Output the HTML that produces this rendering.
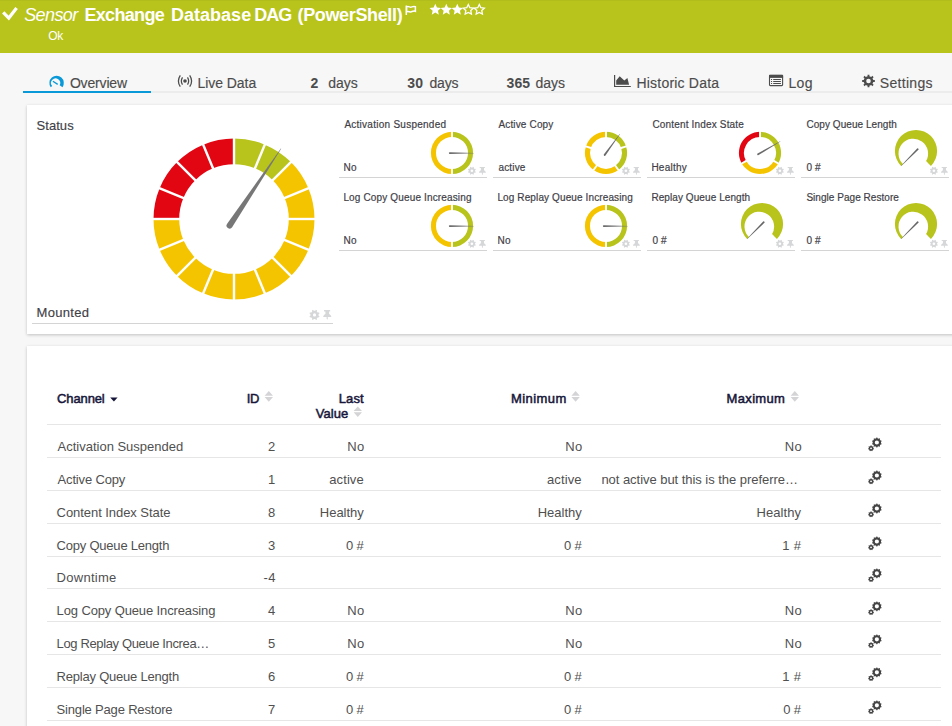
<!DOCTYPE html><html lang="en"><head><meta charset="utf-8"><title>Exchange Database DAG (PowerShell) | Sensor Details</title>
<style>
html,body{margin:0;padding:0}
body{width:952px;height:726px;overflow:hidden;position:relative;background:#f7f7f7;font-family:'Liberation Sans', Arial, sans-serif;}
.t{position:absolute;white-space:pre;line-height:1;margin:0;font-weight:400}
header .bar{position:absolute;left:0;top:0;width:952px;height:53px;background:#b8c41c;border-top:1px solid #b0bd1b;box-sizing:border-box}
h1,p{margin:0;font-size:inherit;font-weight:inherit}
nav .rule{position:absolute;left:23px;top:91px;width:929px;height:2px;background:#ececec}
nav .act{position:absolute;left:23px;top:91px;width:128px;height:2px;background:#0a99d8}
.card{position:absolute;background:#fff;box-shadow:0 1px 3px rgba(0,0,0,.22)}
#c1{left:27px;top:105px;width:940px;height:229px}
#c2{left:27px;top:346px;width:940px;height:400px}
.hl{position:absolute;height:1px;background:#d4d4d4}
.rl{position:absolute;left:47px;width:894px;height:1px;background:#e6e6e6}
svg{position:absolute;left:0;top:0}
</style></head><body>
<header><div class="bar"></div>
<h1><span class="t" style="left:24.2px;top:5.8px;font-size:18px;font-style:italic;letter-spacing:-0.6px;color:#fff;">Sensor</span> <span class="t" style="left:84.4px;top:5.8px;font-size:18px;font-weight:700;letter-spacing:-0.67px;color:#fff;">Exchange</span> <span class="t" style="left:171.1px;top:5.8px;font-size:18px;font-weight:700;color:#fff;">Database</span> <span class="t" style="left:254.3px;top:5.8px;font-size:18px;font-weight:700;letter-spacing:-1.0px;color:#fff;">DAG</span> <span class="t" style="left:297.5px;top:5.8px;font-size:18px;font-weight:700;letter-spacing:-0.35px;color:#fff;">(PowerShell)</span></h1>
<p><span class="t" style="left:48.3px;top:29.7px;font-size:12px;letter-spacing:-0.35px;color:#fff;">Ok</span></p>
</header>
<nav><div class="rule"></div><div class="act"></div>
<span class="t" style="left:69.9px;top:75.6px;font-size:14px;letter-spacing:-0.17px;color:#4c4c4c;-webkit-text-stroke:0.15px #4c4c4c;">Overview</span>
<span class="t" style="left:197.6px;top:75.6px;font-size:14px;letter-spacing:-0.07px;color:#4c4c4c;-webkit-text-stroke:0.15px #4c4c4c;">Live Data</span>
<span class="t" style="left:310.4px;top:75.6px;font-size:14px;font-weight:700;color:#4c4c4c;">2</span>
<span class="t" style="left:328.2px;top:75.6px;font-size:14px;letter-spacing:-0.03px;color:#4c4c4c;-webkit-text-stroke:0.15px #4c4c4c;">days</span>
<span class="t" style="left:407.2px;top:75.6px;font-size:14px;font-weight:700;letter-spacing:0.2px;color:#4c4c4c;">30</span>
<span class="t" style="left:429.4px;top:75.6px;font-size:14px;letter-spacing:-0.13px;color:#4c4c4c;-webkit-text-stroke:0.15px #4c4c4c;">days</span>
<span class="t" style="left:506.4px;top:75.6px;font-size:14px;font-weight:700;letter-spacing:0.2px;color:#4c4c4c;">365</span>
<span class="t" style="left:535.4px;top:75.6px;font-size:14px;color:#4c4c4c;-webkit-text-stroke:0.15px #4c4c4c;">days</span>
<span class="t" style="left:636.5px;top:75.6px;font-size:14px;letter-spacing:0.2px;color:#4c4c4c;-webkit-text-stroke:0.15px #4c4c4c;">Historic Data</span>
<span class="t" style="left:788.4px;top:75.6px;font-size:14px;letter-spacing:0.35px;color:#4c4c4c;-webkit-text-stroke:0.15px #4c4c4c;">Log</span>
<span class="t" style="left:879.8px;top:75.6px;font-size:14px;letter-spacing:0.31px;color:#4c4c4c;-webkit-text-stroke:0.15px #4c4c4c;">Settings</span>
</nav>
<main>
<section id="status"><div class="card" id="c1"></div>
<div class="gauge big"><span class="t" style="left:36.5px;top:118.6px;font-size:13px;letter-spacing:0.06px;color:#3f3f48;-webkit-text-stroke:0.15px #3f3f48;">Status</span> <span class="t" style="left:36.5px;top:305.7px;font-size:13px;letter-spacing:0.32px;color:#3f3f48;-webkit-text-stroke:0.15px #3f3f48;">Mounted</span><div class="hl" style="left:32px;top:323px;width:301px"></div></div>
<div class="gauge"><span class="t" style="left:344.4px;top:119.6px;font-size:10px;letter-spacing:0.26px;color:#3f3f48;-webkit-text-stroke:0.2px #3f3f48;">Activation Suspended</span> <span class="t" style="left:343.4px;top:162.5px;font-size:10px;letter-spacing:0.35px;color:#3f3f48;-webkit-text-stroke:0.2px #3f3f48;">No</span><div class="hl" style="left:339px;top:177px;width:148px"></div></div>
<div class="gauge"><span class="t" style="left:498.4px;top:119.6px;font-size:10px;letter-spacing:0.16px;color:#3f3f48;-webkit-text-stroke:0.2px #3f3f48;">Active Copy</span> <span class="t" style="left:498.4px;top:162.5px;font-size:10px;letter-spacing:0.18px;color:#3f3f48;-webkit-text-stroke:0.2px #3f3f48;">active</span><div class="hl" style="left:493px;top:177px;width:148px"></div></div>
<div class="gauge"><span class="t" style="left:652.4px;top:119.6px;font-size:10px;letter-spacing:0.17px;color:#3f3f48;-webkit-text-stroke:0.2px #3f3f48;">Content Index State</span> <span class="t" style="left:651.4px;top:162.5px;font-size:10px;letter-spacing:0.25px;color:#3f3f48;-webkit-text-stroke:0.2px #3f3f48;">Healthy</span><div class="hl" style="left:647px;top:177px;width:148px"></div></div>
<div class="gauge"><span class="t" style="left:806.4px;top:119.6px;font-size:10px;letter-spacing:0.06px;color:#3f3f48;-webkit-text-stroke:0.2px #3f3f48;">Copy Queue Length</span> <span class="t" style="left:806.4px;top:162.5px;font-size:10px;letter-spacing:0.15px;color:#3f3f48;-webkit-text-stroke:0.2px #3f3f48;">0 #</span><div class="hl" style="left:801px;top:177px;width:148px"></div></div>
<div class="gauge"><span class="t" style="left:343.4px;top:192.6px;font-size:10px;letter-spacing:0.15px;color:#3f3f48;-webkit-text-stroke:0.2px #3f3f48;">Log Copy Queue Increasing</span> <span class="t" style="left:343.4px;top:235.5px;font-size:10px;letter-spacing:0.35px;color:#3f3f48;-webkit-text-stroke:0.2px #3f3f48;">No</span><div class="hl" style="left:339px;top:250px;width:148px"></div></div>
<div class="gauge"><span class="t" style="left:497.4px;top:192.6px;font-size:10px;letter-spacing:0.12px;color:#3f3f48;-webkit-text-stroke:0.2px #3f3f48;">Log Replay Queue Increasing</span> <span class="t" style="left:497.4px;top:235.5px;font-size:10px;letter-spacing:0.35px;color:#3f3f48;-webkit-text-stroke:0.2px #3f3f48;">No</span><div class="hl" style="left:493px;top:250px;width:148px"></div></div>
<div class="gauge"><span class="t" style="left:651.4px;top:192.6px;font-size:10px;letter-spacing:0.08px;color:#3f3f48;-webkit-text-stroke:0.2px #3f3f48;">Replay Queue Length</span> <span class="t" style="left:652.4px;top:235.5px;font-size:10px;letter-spacing:0.15px;color:#3f3f48;-webkit-text-stroke:0.2px #3f3f48;">0 #</span><div class="hl" style="left:647px;top:250px;width:148px"></div></div>
<div class="gauge"><span class="t" style="left:806.4px;top:192.6px;font-size:10px;letter-spacing:0.04px;color:#3f3f48;-webkit-text-stroke:0.2px #3f3f48;">Single Page Restore</span> <span class="t" style="left:806.4px;top:235.5px;font-size:10px;letter-spacing:0.15px;color:#3f3f48;-webkit-text-stroke:0.2px #3f3f48;">0 #</span><div class="hl" style="left:801px;top:250px;width:148px"></div></div>
</section>
<section id="channels"><div class="card" id="c2"></div>
<div class="thead"><span class="t" style="left:57.1px;top:392.2px;font-size:13px;letter-spacing:-0.13px;color:#16163a;-webkit-text-stroke:0.5px #16163a;">Channel</span> <span class="t" style="left:246.7px;top:392.2px;font-size:13px;letter-spacing:-0.35px;color:#16163a;-webkit-text-stroke:0.5px #16163a;">ID</span> <span class="t" style="left:338.7px;top:392.2px;font-size:13px;letter-spacing:0.13px;color:#16163a;-webkit-text-stroke:0.5px #16163a;">Last</span> <span class="t" style="left:315.7px;top:406.8px;font-size:13px;letter-spacing:0.08px;color:#16163a;-webkit-text-stroke:0.5px #16163a;">Value</span> <span class="t" style="left:510.9px;top:392.2px;font-size:13px;letter-spacing:0.45px;color:#16163a;-webkit-text-stroke:0.5px #16163a;">Minimum</span> <span class="t" style="left:726.6px;top:392.2px;font-size:13px;letter-spacing:0.33px;color:#16163a;-webkit-text-stroke:0.5px #16163a;">Maximum</span><div class="rl" style="top:424px"></div></div>
<div class="row"><span class="t" style="left:57.6px;top:440.2px;font-size:13px;letter-spacing:-0.01px;color:#505050;">Activation Suspended</span> <span class="t" style="left:267.9px;top:440.2px;font-size:13px;color:#505050;">2</span> <span class="t" style="left:347.35px;top:440.2px;font-size:13px;letter-spacing:0.35px;color:#505050;">No</span> <span class="t" style="left:565.25px;top:440.2px;font-size:13px;letter-spacing:0.35px;color:#505050;">No</span> <span class="t" style="left:784.65px;top:440.2px;font-size:13px;letter-spacing:0.35px;color:#505050;">No</span><div class="rl" style="top:457px"></div></div>
<div class="row"><span class="t" style="left:57.6px;top:473.2px;font-size:13px;letter-spacing:-0.17px;color:#505050;">Active Copy</span> <span class="t" style="left:267.9px;top:473.2px;font-size:13px;color:#505050;">1</span> <span class="t" style="left:329.3px;top:473.2px;font-size:13px;letter-spacing:0.08px;color:#505050;">active</span> <span class="t" style="left:547.0px;top:473.2px;font-size:13px;letter-spacing:0.12px;color:#505050;">active</span> <span class="t" style="left:601.4px;top:473.2px;font-size:13px;letter-spacing:-0.04px;color:#505050;">not active but this is the preferre…</span><div class="rl" style="top:490px"></div></div>
<div class="row"><span class="t" style="left:56.6px;top:506.2px;font-size:13px;letter-spacing:-0.06px;color:#505050;">Content Index State</span> <span class="t" style="left:267.9px;top:506.2px;font-size:13px;color:#505050;">8</span> <span class="t" style="left:319.82px;top:506.2px;font-size:13px;letter-spacing:-0.02px;color:#505050;">Healthy</span> <span class="t" style="left:537.72px;top:506.2px;font-size:13px;letter-spacing:-0.02px;color:#505050;">Healthy</span> <span class="t" style="left:756.4px;top:506.2px;font-size:13px;letter-spacing:0.1px;color:#505050;">Healthy</span><div class="rl" style="top:523px"></div></div>
<div class="row"><span class="t" style="left:56.6px;top:539.2px;font-size:13px;letter-spacing:-0.22px;color:#505050;">Copy Queue Length</span> <span class="t" style="left:267.9px;top:539.2px;font-size:13px;color:#505050;">3</span> <span class="t" style="left:346.0px;top:539.2px;font-size:13px;letter-spacing:-0.15px;color:#505050;">0 #</span> <span class="t" style="left:563.9px;top:539.2px;font-size:13px;letter-spacing:-0.15px;color:#505050;">0 #</span> <span class="t" style="left:782.3px;top:539.2px;font-size:13px;letter-spacing:0.35px;color:#505050;">1 #</span><div class="rl" style="top:556px"></div></div>
<div class="row"><span class="t" style="left:56.6px;top:571px;font-size:13px;letter-spacing:0.27px;color:#505050;">Downtime</span> <span class="t" style="left:263.55px;top:571px;font-size:13px;letter-spacing:0.35px;color:#505050;">-4</span><div class="rl" style="top:588px"></div></div>
<div class="row"><span class="t" style="left:56.6px;top:604px;font-size:13px;letter-spacing:-0.13px;color:#505050;">Log Copy Queue Increasing</span> <span class="t" style="left:267.9px;top:604px;font-size:13px;color:#505050;">4</span> <span class="t" style="left:347.35px;top:604px;font-size:13px;letter-spacing:0.35px;color:#505050;">No</span> <span class="t" style="left:565.25px;top:604px;font-size:13px;letter-spacing:0.35px;color:#505050;">No</span> <span class="t" style="left:784.65px;top:604px;font-size:13px;letter-spacing:0.35px;color:#505050;">No</span><div class="rl" style="top:621px"></div></div>
<div class="row"><span class="t" style="left:56.6px;top:637px;font-size:13px;letter-spacing:-0.37px;color:#505050;">Log Replay Queue Increa…</span> <span class="t" style="left:267.9px;top:637px;font-size:13px;color:#505050;">5</span> <span class="t" style="left:347.35px;top:637px;font-size:13px;letter-spacing:0.35px;color:#505050;">No</span> <span class="t" style="left:565.25px;top:637px;font-size:13px;letter-spacing:0.35px;color:#505050;">No</span> <span class="t" style="left:784.65px;top:637px;font-size:13px;letter-spacing:0.35px;color:#505050;">No</span><div class="rl" style="top:654px"></div></div>
<div class="row"><span class="t" style="left:56.6px;top:670px;font-size:13px;letter-spacing:-0.22px;color:#505050;">Replay Queue Length</span> <span class="t" style="left:267.9px;top:670px;font-size:13px;color:#505050;">6</span> <span class="t" style="left:346.0px;top:670px;font-size:13px;letter-spacing:-0.15px;color:#505050;">0 #</span> <span class="t" style="left:563.9px;top:670px;font-size:13px;letter-spacing:-0.15px;color:#505050;">0 #</span> <span class="t" style="left:782.3px;top:670px;font-size:13px;letter-spacing:0.35px;color:#505050;">1 #</span><div class="rl" style="top:687px"></div></div>
<div class="row"><span class="t" style="left:56.6px;top:703px;font-size:13px;letter-spacing:-0.18px;color:#505050;">Single Page Restore</span> <span class="t" style="left:267.9px;top:703px;font-size:13px;color:#505050;">7</span> <span class="t" style="left:346.0px;top:703px;font-size:13px;letter-spacing:-0.15px;color:#505050;">0 #</span> <span class="t" style="left:563.9px;top:703px;font-size:13px;letter-spacing:-0.15px;color:#505050;">0 #</span> <span class="t" style="left:783.3px;top:703px;font-size:13px;letter-spacing:-0.15px;color:#505050;">0 #</span><div class="rl" style="top:720px"></div></div>
</section>
</main>
<svg width="952" height="726" viewBox="0 0 952 726"><path fill="none" stroke="#fff" stroke-width="3.2" d="M3.2 12.300L8.800 18L16.600 7.900"/><g fill="none" stroke="#fff" stroke-width="1.500"><path d="M406.300 5.500v9.500"/><path d="M406.600 6.900c1.800-1.100 3.200.7 4.600.2s2.300-1.100 4.200-.4v4.600c-1.900-.7-2.800 0-4.200.5s-2.800-1.100-4.600 0z"/></g><path fill="#fff" d="M435.30 3.80L436.95 7.53L441.01 7.95L437.96 10.67L438.83 14.65L435.30 12.60L431.77 14.65L432.64 10.67L429.59 7.95L433.65 7.53Z"/><path fill="#fff" d="M446.30 3.80L447.95 7.53L452.01 7.95L448.96 10.67L449.83 14.65L446.30 12.60L442.77 14.65L443.64 10.67L440.59 7.95L444.65 7.53Z"/><path fill="#fff" d="M457.30 3.80L458.95 7.53L463.01 7.95L459.96 10.67L460.83 14.65L457.30 12.60L453.77 14.65L454.64 10.67L451.59 7.95L455.65 7.53Z"/><path fill="none" stroke="#fff" stroke-width="1.300" d="M468.30 4.50L469.83 7.70L473.34 8.16L470.77 10.60L471.42 14.09L468.30 12.40L465.18 14.09L465.83 10.60L463.26 8.16L466.77 7.70Z"/><path fill="none" stroke="#fff" stroke-width="1.300" d="M479.30 4.50L480.83 7.70L484.34 8.16L481.77 10.60L482.42 14.09L479.30 12.40L476.18 14.09L476.83 10.60L474.26 8.16L477.77 7.70Z"/><path fill="#0a99d8" d="M50.70 87.13A7.2 7.2 0 1 1 62.50 87.13L59.67 85.15A4.6 4.6 0 1 0 52.19 86.09Z"/><path stroke="#0a99d8" stroke-width="1.300" fill="none" d="M57.700 84.400L52.900 81.200"/><g fill="none" stroke="#4c4c4c" stroke-width="1.250"><circle cx="185" cy="81" r="1.800" fill="#4c4c4c" stroke="none"/><path d="M182.500 77.300Q180.200 81 182.500 84.700M187.500 77.300Q189.800 81 187.500 84.700M180.300 75.300Q176.500 81 180.300 86.700M189.700 75.300Q193.500 81 189.700 86.700"/></g><path fill="#4c4c4c" d="M614 74.900h1.200v11h15.600v1.100H614zM616.200 84.800V80.600L619.700 76.200L624.300 80.600L627.400 78.100L629.100 84.800Z"/><g><rect x="769.500" y="75.400" width="13.100" height="10.200" rx="0.800" fill="none" stroke="#4c4c4c" stroke-width="1.100"/><rect x="769" y="74.900" width="14.100" height="3" fill="#4c4c4c"/><path stroke="#4c4c4c" stroke-width="1" d="M771 79.500h1.100M771 81.500h1.100M771 83.500h1.100M773.200 79.500h7.700M773.200 81.500h7.700M773.200 83.500h7.700"/></g><path fill="#4c4c4c" fill-rule="evenodd" d="M867.59 76.22L867.55 74.67L869.45 74.67L869.41 76.22L871.23 76.98L872.30 75.85L873.65 77.20L872.52 78.27L873.28 80.09L874.83 80.05L874.83 81.95L873.28 81.91L872.52 83.73L873.65 84.80L872.30 86.15L871.23 85.02L869.41 85.78L869.45 87.33L867.55 87.33L867.59 85.78L865.77 85.02L864.70 86.15L863.35 84.80L864.48 83.73L863.72 81.91L862.17 81.95L862.17 80.05L863.72 80.09L864.48 78.27L863.35 77.20L864.70 75.85L865.77 76.98ZM866.20 81.00a2.3 2.3 0 1 0 4.6 0a2.3 2.3 0 1 0 -4.6 0Z"/><path fill="#b8c41c" d="M234.00 138.50A80.5 80.5 0 0 1 264.81 144.63L254.97 168.37A54.8 54.8 0 0 0 234.00 164.20Z"/><path fill="#b8c41c" d="M264.81 144.63A80.5 80.5 0 0 1 290.92 162.08L272.75 180.25A54.8 54.8 0 0 0 254.97 168.37Z"/><path fill="#f5c400" d="M290.92 162.08A80.5 80.5 0 0 1 308.37 188.19L284.63 198.03A54.8 54.8 0 0 0 272.75 180.25Z"/><path fill="#f5c400" d="M308.37 188.19A80.5 80.5 0 0 1 314.50 219.00L288.80 219.00A54.8 54.8 0 0 0 284.63 198.03Z"/><path fill="#f5c400" d="M314.50 219.00A80.5 80.5 0 0 1 308.37 249.81L284.63 239.97A54.8 54.8 0 0 0 288.80 219.00Z"/><path fill="#f5c400" d="M308.37 249.81A80.5 80.5 0 0 1 290.92 275.92L272.75 257.75A54.8 54.8 0 0 0 284.63 239.97Z"/><path fill="#f5c400" d="M290.92 275.92A80.5 80.5 0 0 1 264.81 293.37L254.97 269.63A54.8 54.8 0 0 0 272.75 257.75Z"/><path fill="#f5c400" d="M264.81 293.37A80.5 80.5 0 0 1 234.00 299.50L234.00 273.80A54.8 54.8 0 0 0 254.97 269.63Z"/><path fill="#f5c400" d="M234.00 299.50A80.5 80.5 0 0 1 203.19 293.37L213.03 269.63A54.8 54.8 0 0 0 234.00 273.80Z"/><path fill="#f5c400" d="M203.19 293.37A80.5 80.5 0 0 1 177.08 275.92L195.25 257.75A54.8 54.8 0 0 0 213.03 269.63Z"/><path fill="#f5c400" d="M177.08 275.92A80.5 80.5 0 0 1 159.63 249.81L183.37 239.97A54.8 54.8 0 0 0 195.25 257.75Z"/><path fill="#f5c400" d="M159.63 249.81A80.5 80.5 0 0 1 153.50 219.00L179.20 219.00A54.8 54.8 0 0 0 183.37 239.97Z"/><path fill="#e20613" d="M153.50 219.00A80.5 80.5 0 0 1 159.63 188.19L183.37 198.03A54.8 54.8 0 0 0 179.20 219.00Z"/><path fill="#e20613" d="M159.63 188.19A80.5 80.5 0 0 1 177.08 162.08L195.25 180.25A54.8 54.8 0 0 0 183.37 198.03Z"/><path fill="#e20613" d="M177.08 162.08A80.5 80.5 0 0 1 203.19 144.63L213.03 168.37A54.8 54.8 0 0 0 195.25 180.25Z"/><path fill="#e20613" d="M203.19 144.63A80.5 80.5 0 0 1 234.00 138.50L234.00 164.20A54.8 54.8 0 0 0 213.03 168.37Z"/><path stroke="#fff" stroke-width="2.4" d="M234.00 165.20L234.00 137.50"/><path stroke="#fff" stroke-width="2.4" d="M254.59 169.30L265.19 143.70"/><path stroke="#fff" stroke-width="2.4" d="M272.04 180.96L291.63 161.37"/><path stroke="#fff" stroke-width="2.4" d="M283.70 198.41L309.30 187.81"/><path stroke="#fff" stroke-width="2.4" d="M287.80 219.00L315.50 219.00"/><path stroke="#fff" stroke-width="2.4" d="M283.70 239.59L309.30 250.19"/><path stroke="#fff" stroke-width="2.4" d="M272.04 257.04L291.63 276.63"/><path stroke="#fff" stroke-width="2.4" d="M254.59 268.70L265.19 294.30"/><path stroke="#fff" stroke-width="2.4" d="M234.00 272.80L234.00 300.50"/><path stroke="#fff" stroke-width="2.4" d="M213.41 268.70L202.81 294.30"/><path stroke="#fff" stroke-width="2.4" d="M195.96 257.04L176.37 276.63"/><path stroke="#fff" stroke-width="2.4" d="M184.30 239.59L158.70 250.19"/><path stroke="#fff" stroke-width="2.4" d="M180.20 219.00L152.50 219.00"/><path stroke="#fff" stroke-width="2.4" d="M184.30 198.41L158.70 187.81"/><path stroke="#fff" stroke-width="2.4" d="M195.96 180.96L176.37 161.37"/><path stroke="#fff" stroke-width="2.4" d="M213.41 169.30L202.81 143.70"/><path fill="#777" d="M232.13 227.37L281.17 148.77L280.83 148.55L226.98 223.93A3.10 3.10 0 0 0 232.13 227.37Z"/><path fill="#d6d7d9" fill-rule="evenodd" d="M315.38 310.83L315.83 309.87L317.11 310.40L316.76 311.41L317.99 312.64L319.00 312.29L319.53 313.57L318.57 314.02L318.57 315.78L319.53 316.23L319.00 317.51L317.99 317.16L316.76 318.39L317.11 319.40L315.83 319.93L315.38 318.97L313.62 318.97L313.17 319.93L311.89 319.40L312.24 318.39L311.01 317.16L310.00 317.51L309.47 316.23L310.43 315.78L310.43 314.02L309.47 313.57L310.00 312.29L311.01 312.64L312.24 311.41L311.89 310.40L313.17 309.87L313.62 310.83ZM312.90 314.90a1.6 1.6 0 1 0 3.2 0a1.6 1.6 0 1 0 -3.2 0Z"/><path fill="#d6d7d9" transform="translate(323.20 310.10) scale(1.18)" d="M0.7 0H5.900V1.100H5V3.300C6.100 3.800 6.800 4.700 6.900 5.900H3.900V7.300L3.400 8.100L2.900 7.300V5.900H0C0.100 4.700 0.800 3.800 1.900 3.300V1.100H0.700Z"/><path fill="#b8c41c" d="M452.00 131.80A21.1 21.1 0 0 1 452.00 174.00L452.00 168.90A16 16 0 0 0 452.00 136.90Z"/><path fill="#f5c400" d="M452.00 174.00A21.1 21.1 0 0 1 452.00 131.80L452.00 136.90A16 16 0 0 0 452.00 168.90Z"/><path stroke="#fff" stroke-width="1.9" d="M452.00 137.90L452.00 130.80"/><path stroke="#fff" stroke-width="1.9" d="M452.00 167.90L452.00 175.00"/><path fill="#6a6a6a" d="M449.80 154.05L473.80 153.25L473.80 152.95L449.80 152.15A0.95 0.95 0 0 0 449.80 154.05Z"/><path fill="#d6d7d9" fill-rule="evenodd" d="M472.59 167.54L472.95 166.79L473.96 167.20L473.68 167.99L474.66 168.97L475.45 168.69L475.86 169.70L475.11 170.06L475.11 171.44L475.86 171.80L475.45 172.81L474.66 172.53L473.68 173.51L473.96 174.30L472.95 174.71L472.59 173.96L471.21 173.96L470.85 174.71L469.84 174.30L470.12 173.51L469.14 172.53L468.35 172.81L467.94 171.80L468.69 171.44L468.69 170.06L467.94 169.70L468.35 168.69L469.14 168.97L470.12 167.99L469.84 167.20L470.85 166.79L471.21 167.54ZM470.60 170.75a1.3 1.3 0 1 0 2.6 0a1.3 1.3 0 1 0 -2.6 0Z"/><path fill="#d6d7d9" transform="translate(479.00 166.90) scale(1.0)" d="M0.7 0H5.900V1.100H5V3.300C6.100 3.800 6.800 4.700 6.900 5.900H3.900V7.300L3.400 8.100L2.900 7.300V5.900H0C0.100 4.700 0.800 3.800 1.900 3.300V1.100H0.700Z"/><path fill="#b8c41c" d="M606.00 131.80A21.1 21.1 0 0 1 626.07 146.38L621.22 147.96A16 16 0 0 0 606.00 136.90Z"/><path fill="#b8c41c" d="M626.07 146.38A21.1 21.1 0 0 1 618.40 169.97L615.40 165.84A16 16 0 0 0 621.22 147.96Z"/><path fill="#f5c400" d="M618.40 169.97A21.1 21.1 0 0 1 593.60 169.97L596.60 165.84A16 16 0 0 0 615.40 165.84Z"/><path fill="#f5c400" d="M593.60 169.97A21.1 21.1 0 0 1 585.93 146.38L590.78 147.96A16 16 0 0 0 596.60 165.84Z"/><path fill="#f5c400" d="M585.93 146.38A21.1 21.1 0 0 1 606.00 131.80L606.00 136.90A16 16 0 0 0 590.78 147.96Z"/><path stroke="#fff" stroke-width="1.9" d="M606.00 137.90L606.00 130.80"/><path stroke="#fff" stroke-width="1.9" d="M620.27 148.26L627.02 146.07"/><path stroke="#fff" stroke-width="1.9" d="M614.82 165.04L618.99 170.78"/><path stroke="#fff" stroke-width="1.9" d="M597.18 165.04L593.01 170.78"/><path stroke="#fff" stroke-width="1.9" d="M591.73 148.26L584.98 146.07"/><path fill="#6a6a6a" d="M605.48 155.44L619.93 134.18L619.69 134.00L603.94 154.32A0.95 0.95 0 0 0 605.48 155.44Z"/><path fill="#d6d7d9" fill-rule="evenodd" d="M626.59 167.54L626.95 166.79L627.96 167.20L627.68 167.99L628.66 168.97L629.45 168.69L629.86 169.70L629.11 170.06L629.11 171.44L629.86 171.80L629.45 172.81L628.66 172.53L627.68 173.51L627.96 174.30L626.95 174.71L626.59 173.96L625.21 173.96L624.85 174.71L623.84 174.30L624.12 173.51L623.14 172.53L622.35 172.81L621.94 171.80L622.69 171.44L622.69 170.06L621.94 169.70L622.35 168.69L623.14 168.97L624.12 167.99L623.84 167.20L624.85 166.79L625.21 167.54ZM624.60 170.75a1.3 1.3 0 1 0 2.6 0a1.3 1.3 0 1 0 -2.6 0Z"/><path fill="#d6d7d9" transform="translate(633.00 166.90) scale(1.0)" d="M0.7 0H5.900V1.100H5V3.300C6.100 3.800 6.800 4.700 6.900 5.900H3.900V7.300L3.400 8.100L2.900 7.300V5.900H0C0.100 4.700 0.800 3.800 1.900 3.300V1.100H0.700Z"/><path fill="#b8c41c" d="M760.00 131.80A21.1 21.1 0 0 1 778.27 163.45L773.86 160.90A16 16 0 0 0 760.00 136.90Z"/><path fill="#f5c400" d="M778.27 163.45A21.1 21.1 0 0 1 741.73 163.45L746.14 160.90A16 16 0 0 0 773.86 160.90Z"/><path fill="#e20613" d="M741.73 163.45A21.1 21.1 0 0 1 760.00 131.80L760.00 136.90A16 16 0 0 0 746.14 160.90Z"/><path stroke="#fff" stroke-width="1.9" d="M760.00 137.90L760.00 130.80"/><path stroke="#fff" stroke-width="1.9" d="M772.99 160.40L779.14 163.95"/><path stroke="#fff" stroke-width="1.9" d="M747.01 160.40L740.86 163.95"/><path fill="#6a6a6a" d="M758.57 155.02L780.43 141.48L780.28 141.22L757.62 153.38A0.95 0.95 0 0 0 758.57 155.02Z"/><path fill="#d6d7d9" fill-rule="evenodd" d="M780.59 167.54L780.95 166.79L781.96 167.20L781.68 167.99L782.66 168.97L783.45 168.69L783.86 169.70L783.11 170.06L783.11 171.44L783.86 171.80L783.45 172.81L782.66 172.53L781.68 173.51L781.96 174.30L780.95 174.71L780.59 173.96L779.21 173.96L778.85 174.71L777.84 174.30L778.12 173.51L777.14 172.53L776.35 172.81L775.94 171.80L776.69 171.44L776.69 170.06L775.94 169.70L776.35 168.69L777.14 168.97L778.12 167.99L777.84 167.20L778.85 166.79L779.21 167.54ZM778.60 170.75a1.3 1.3 0 1 0 2.6 0a1.3 1.3 0 1 0 -2.6 0Z"/><path fill="#d6d7d9" transform="translate(787.00 166.90) scale(1.0)" d="M0.7 0H5.900V1.100H5V3.300C6.100 3.800 6.800 4.700 6.900 5.900H3.900V7.300L3.400 8.100L2.900 7.300V5.900H0C0.100 4.700 0.800 3.800 1.900 3.300V1.100H0.700Z"/><path fill="#b8c41c" d="M901.08 165.92A21.1 21.1 0 1 1 930.92 165.92L926.04 161.04A14.8 14.8 0 1 0 902.94 164.06Z"/><path fill="#666" d="M917.13 148.60L901.04 165.74L901.26 165.96L918.40 149.87A0.90 0.90 0 0 0 917.13 148.60Z"/><path fill="#d6d7d9" fill-rule="evenodd" d="M934.59 167.54L934.95 166.79L935.96 167.20L935.68 167.99L936.66 168.97L937.45 168.69L937.86 169.70L937.11 170.06L937.11 171.44L937.86 171.80L937.45 172.81L936.66 172.53L935.68 173.51L935.96 174.30L934.95 174.71L934.59 173.96L933.21 173.96L932.85 174.71L931.84 174.30L932.12 173.51L931.14 172.53L930.35 172.81L929.94 171.80L930.69 171.44L930.69 170.06L929.94 169.70L930.35 168.69L931.14 168.97L932.12 167.99L931.84 167.20L932.85 166.79L933.21 167.54ZM932.60 170.75a1.3 1.3 0 1 0 2.6 0a1.3 1.3 0 1 0 -2.6 0Z"/><path fill="#d6d7d9" transform="translate(941.00 166.90) scale(1.0)" d="M0.7 0H5.900V1.100H5V3.300C6.100 3.800 6.800 4.700 6.900 5.900H3.900V7.300L3.400 8.100L2.900 7.300V5.900H0C0.100 4.700 0.800 3.800 1.900 3.300V1.100H0.700Z"/><path fill="#b8c41c" d="M452.00 204.80A21.1 21.1 0 0 1 452.00 247.00L452.00 241.90A16 16 0 0 0 452.00 209.90Z"/><path fill="#f5c400" d="M452.00 247.00A21.1 21.1 0 0 1 452.00 204.80L452.00 209.90A16 16 0 0 0 452.00 241.90Z"/><path stroke="#fff" stroke-width="1.9" d="M452.00 210.90L452.00 203.80"/><path stroke="#fff" stroke-width="1.9" d="M452.00 240.90L452.00 248.00"/><path fill="#6a6a6a" d="M449.80 227.05L473.80 226.25L473.80 225.95L449.80 225.15A0.95 0.95 0 0 0 449.80 227.05Z"/><path fill="#d6d7d9" fill-rule="evenodd" d="M472.59 240.54L472.95 239.79L473.96 240.20L473.68 240.99L474.66 241.97L475.45 241.69L475.86 242.70L475.11 243.06L475.11 244.44L475.86 244.80L475.45 245.81L474.66 245.53L473.68 246.51L473.96 247.30L472.95 247.71L472.59 246.96L471.21 246.96L470.85 247.71L469.84 247.30L470.12 246.51L469.14 245.53L468.35 245.81L467.94 244.80L468.69 244.44L468.69 243.06L467.94 242.70L468.35 241.69L469.14 241.97L470.12 240.99L469.84 240.20L470.85 239.79L471.21 240.54ZM470.60 243.75a1.3 1.3 0 1 0 2.6 0a1.3 1.3 0 1 0 -2.6 0Z"/><path fill="#d6d7d9" transform="translate(479.00 239.90) scale(1.0)" d="M0.7 0H5.900V1.100H5V3.300C6.100 3.800 6.800 4.700 6.900 5.900H3.900V7.300L3.400 8.100L2.900 7.300V5.900H0C0.100 4.700 0.800 3.800 1.900 3.300V1.100H0.700Z"/><path fill="#b8c41c" d="M606.00 204.80A21.1 21.1 0 0 1 606.00 247.00L606.00 241.90A16 16 0 0 0 606.00 209.90Z"/><path fill="#f5c400" d="M606.00 247.00A21.1 21.1 0 0 1 606.00 204.80L606.00 209.90A16 16 0 0 0 606.00 241.90Z"/><path stroke="#fff" stroke-width="1.9" d="M606.00 210.90L606.00 203.80"/><path stroke="#fff" stroke-width="1.9" d="M606.00 240.90L606.00 248.00"/><path fill="#6a6a6a" d="M603.80 227.05L627.80 226.25L627.80 225.95L603.80 225.15A0.95 0.95 0 0 0 603.80 227.05Z"/><path fill="#d6d7d9" fill-rule="evenodd" d="M626.59 240.54L626.95 239.79L627.96 240.20L627.68 240.99L628.66 241.97L629.45 241.69L629.86 242.70L629.11 243.06L629.11 244.44L629.86 244.80L629.45 245.81L628.66 245.53L627.68 246.51L627.96 247.30L626.95 247.71L626.59 246.96L625.21 246.96L624.85 247.71L623.84 247.30L624.12 246.51L623.14 245.53L622.35 245.81L621.94 244.80L622.69 244.44L622.69 243.06L621.94 242.70L622.35 241.69L623.14 241.97L624.12 240.99L623.84 240.20L624.85 239.79L625.21 240.54ZM624.60 243.75a1.3 1.3 0 1 0 2.6 0a1.3 1.3 0 1 0 -2.6 0Z"/><path fill="#d6d7d9" transform="translate(633.00 239.90) scale(1.0)" d="M0.7 0H5.900V1.100H5V3.300C6.100 3.800 6.800 4.700 6.900 5.900H3.900V7.300L3.400 8.100L2.900 7.300V5.900H0C0.100 4.700 0.800 3.800 1.900 3.300V1.100H0.700Z"/><path fill="#b8c41c" d="M747.08 238.92A21.1 21.1 0 1 1 776.92 238.92L772.04 234.04A14.8 14.8 0 1 0 748.94 237.06Z"/><path fill="#666" d="M763.13 221.60L747.04 238.74L747.26 238.96L764.40 222.87A0.90 0.90 0 0 0 763.13 221.60Z"/><path fill="#d6d7d9" fill-rule="evenodd" d="M780.59 240.54L780.95 239.79L781.96 240.20L781.68 240.99L782.66 241.97L783.45 241.69L783.86 242.70L783.11 243.06L783.11 244.44L783.86 244.80L783.45 245.81L782.66 245.53L781.68 246.51L781.96 247.30L780.95 247.71L780.59 246.96L779.21 246.96L778.85 247.71L777.84 247.30L778.12 246.51L777.14 245.53L776.35 245.81L775.94 244.80L776.69 244.44L776.69 243.06L775.94 242.70L776.35 241.69L777.14 241.97L778.12 240.99L777.84 240.20L778.85 239.79L779.21 240.54ZM778.60 243.75a1.3 1.3 0 1 0 2.6 0a1.3 1.3 0 1 0 -2.6 0Z"/><path fill="#d6d7d9" transform="translate(787.00 239.90) scale(1.0)" d="M0.7 0H5.900V1.100H5V3.300C6.100 3.800 6.800 4.700 6.900 5.900H3.900V7.300L3.400 8.100L2.900 7.300V5.900H0C0.100 4.700 0.800 3.800 1.900 3.300V1.100H0.700Z"/><path fill="#b8c41c" d="M901.08 238.92A21.1 21.1 0 1 1 930.92 238.92L926.04 234.04A14.8 14.8 0 1 0 902.94 237.06Z"/><path fill="#666" d="M917.13 221.60L901.04 238.74L901.26 238.96L918.40 222.87A0.90 0.90 0 0 0 917.13 221.60Z"/><path fill="#d6d7d9" fill-rule="evenodd" d="M934.59 240.54L934.95 239.79L935.96 240.20L935.68 240.99L936.66 241.97L937.45 241.69L937.86 242.70L937.11 243.06L937.11 244.44L937.86 244.80L937.45 245.81L936.66 245.53L935.68 246.51L935.96 247.30L934.95 247.71L934.59 246.96L933.21 246.96L932.85 247.71L931.84 247.30L932.12 246.51L931.14 245.53L930.35 245.81L929.94 244.80L930.69 244.44L930.69 243.06L929.94 242.70L930.35 241.69L931.14 241.97L932.12 240.99L931.84 240.20L932.85 239.79L933.21 240.54ZM932.60 243.75a1.3 1.3 0 1 0 2.6 0a1.3 1.3 0 1 0 -2.6 0Z"/><path fill="#d6d7d9" transform="translate(941.00 239.90) scale(1.0)" d="M0.7 0H5.900V1.100H5V3.300C6.100 3.800 6.800 4.700 6.900 5.900H3.900V7.300L3.400 8.100L2.900 7.300V5.900H0C0.100 4.700 0.800 3.800 1.900 3.300V1.100H0.700Z"/><path fill="#16163a" d="M110.200 397.600h7.400l-3.700 3.800z"/><path fill="#d4d4d7" d="M264.60 395.70l4.2-4.600 4.200 4.600zM264.60 396.90h8.400l-4.200 4.900z"/><path fill="#d4d4d7" d="M353.60 411.00l4.2-4.600 4.200 4.600zM353.60 412.20h8.400l-4.200 4.900z"/><path fill="#d4d4d7" d="M571.40 395.70l4.2-4.600 4.200 4.600zM571.40 396.90h8.400l-4.200 4.900z"/><path fill="#d4d4d7" d="M790.60 395.70l4.2-4.600 4.200 4.600zM790.60 396.90h8.400l-4.200 4.900z"/><path fill="#444" fill-rule="evenodd" d="M876.22 438.33L876.42 437.62L877.28 437.62L877.48 438.33L878.79 438.76L879.37 438.30L880.07 438.80L879.81 439.50L880.62 440.61L881.36 440.58L881.63 441.40L881.01 441.81L881.01 443.19L881.63 443.60L881.36 444.42L880.62 444.39L879.81 445.50L880.07 446.20L879.37 446.70L878.79 446.24L877.48 446.67L877.28 447.38L876.42 447.38L876.22 446.67L874.91 446.24L874.33 446.70L873.63 446.20L873.89 445.50L873.08 444.39L872.34 444.42L872.07 443.60L872.69 443.19L872.69 441.81L872.07 441.40L872.34 440.58L873.08 440.61L873.89 439.50L873.63 438.80L874.33 438.30L874.91 438.76ZM874.75 442.50a2.1 2.1 0 1 0 4.2 0a2.1 2.1 0 1 0 -4.2 0Z"/><path fill="#444" fill-rule="evenodd" d="M870.54 446.01L870.67 445.37L871.43 445.37L871.56 446.01L872.56 446.49L873.14 446.20L873.61 446.79L873.20 447.29L873.45 448.37L874.04 448.65L873.87 449.38L873.22 449.37L872.53 450.24L872.68 450.87L872.00 451.19L871.61 450.68L870.49 450.68L870.10 451.19L869.42 450.87L869.57 450.24L868.88 449.37L868.23 449.38L868.06 448.65L868.65 448.37L868.90 447.29L868.49 446.79L868.96 446.20L869.54 446.49ZM870.15 448.35a0.9 0.9 0 1 0 1.8 0a0.9 0.9 0 1 0 -1.8 0Z"/><path fill="#444" fill-rule="evenodd" d="M876.22 471.33L876.42 470.62L877.28 470.62L877.48 471.33L878.79 471.76L879.37 471.30L880.07 471.80L879.81 472.50L880.62 473.61L881.36 473.58L881.63 474.40L881.01 474.81L881.01 476.19L881.63 476.60L881.36 477.42L880.62 477.39L879.81 478.50L880.07 479.20L879.37 479.70L878.79 479.24L877.48 479.67L877.28 480.38L876.42 480.38L876.22 479.67L874.91 479.24L874.33 479.70L873.63 479.20L873.89 478.50L873.08 477.39L872.34 477.42L872.07 476.60L872.69 476.19L872.69 474.81L872.07 474.40L872.34 473.58L873.08 473.61L873.89 472.50L873.63 471.80L874.33 471.30L874.91 471.76ZM874.75 475.50a2.1 2.1 0 1 0 4.2 0a2.1 2.1 0 1 0 -4.2 0Z"/><path fill="#444" fill-rule="evenodd" d="M870.54 479.01L870.67 478.37L871.43 478.37L871.56 479.01L872.56 479.49L873.14 479.20L873.61 479.79L873.20 480.29L873.45 481.37L874.04 481.65L873.87 482.38L873.22 482.37L872.53 483.24L872.68 483.87L872.00 484.19L871.61 483.68L870.49 483.68L870.10 484.19L869.42 483.87L869.57 483.24L868.88 482.37L868.23 482.38L868.06 481.65L868.65 481.37L868.90 480.29L868.49 479.79L868.96 479.20L869.54 479.49ZM870.15 481.35a0.9 0.9 0 1 0 1.8 0a0.9 0.9 0 1 0 -1.8 0Z"/><path fill="#444" fill-rule="evenodd" d="M876.22 504.33L876.42 503.62L877.28 503.62L877.48 504.33L878.79 504.76L879.37 504.30L880.07 504.80L879.81 505.50L880.62 506.61L881.36 506.58L881.63 507.40L881.01 507.81L881.01 509.19L881.63 509.60L881.36 510.42L880.62 510.39L879.81 511.50L880.07 512.20L879.37 512.70L878.79 512.24L877.48 512.67L877.28 513.38L876.42 513.38L876.22 512.67L874.91 512.24L874.33 512.70L873.63 512.20L873.89 511.50L873.08 510.39L872.34 510.42L872.07 509.60L872.69 509.19L872.69 507.81L872.07 507.40L872.34 506.58L873.08 506.61L873.89 505.50L873.63 504.80L874.33 504.30L874.91 504.76ZM874.75 508.50a2.1 2.1 0 1 0 4.2 0a2.1 2.1 0 1 0 -4.2 0Z"/><path fill="#444" fill-rule="evenodd" d="M870.54 512.01L870.67 511.37L871.43 511.37L871.56 512.01L872.56 512.49L873.14 512.20L873.61 512.79L873.20 513.29L873.45 514.37L874.04 514.65L873.87 515.38L873.22 515.37L872.53 516.24L872.68 516.87L872.00 517.19L871.61 516.68L870.49 516.68L870.10 517.19L869.42 516.87L869.57 516.24L868.88 515.37L868.23 515.38L868.06 514.65L868.65 514.37L868.90 513.29L868.49 512.79L868.96 512.20L869.54 512.49ZM870.15 514.35a0.9 0.9 0 1 0 1.8 0a0.9 0.9 0 1 0 -1.8 0Z"/><path fill="#444" fill-rule="evenodd" d="M876.22 537.33L876.42 536.62L877.28 536.62L877.48 537.33L878.79 537.76L879.37 537.30L880.07 537.80L879.81 538.50L880.62 539.61L881.36 539.58L881.63 540.40L881.01 540.81L881.01 542.19L881.63 542.60L881.36 543.42L880.62 543.39L879.81 544.50L880.07 545.20L879.37 545.70L878.79 545.24L877.48 545.67L877.28 546.38L876.42 546.38L876.22 545.67L874.91 545.24L874.33 545.70L873.63 545.20L873.89 544.50L873.08 543.39L872.34 543.42L872.07 542.60L872.69 542.19L872.69 540.81L872.07 540.40L872.34 539.58L873.08 539.61L873.89 538.50L873.63 537.80L874.33 537.30L874.91 537.76ZM874.75 541.50a2.1 2.1 0 1 0 4.2 0a2.1 2.1 0 1 0 -4.2 0Z"/><path fill="#444" fill-rule="evenodd" d="M870.54 545.01L870.67 544.37L871.43 544.37L871.56 545.01L872.56 545.49L873.14 545.20L873.61 545.79L873.20 546.29L873.45 547.37L874.04 547.65L873.87 548.38L873.22 548.37L872.53 549.24L872.68 549.87L872.00 550.19L871.61 549.68L870.49 549.68L870.10 550.19L869.42 549.87L869.57 549.24L868.88 548.37L868.23 548.38L868.06 547.65L868.65 547.37L868.90 546.29L868.49 545.79L868.96 545.20L869.54 545.49ZM870.15 547.35a0.9 0.9 0 1 0 1.8 0a0.9 0.9 0 1 0 -1.8 0Z"/><path fill="#444" fill-rule="evenodd" d="M876.22 569.13L876.42 568.42L877.28 568.42L877.48 569.13L878.79 569.56L879.37 569.10L880.07 569.60L879.81 570.30L880.62 571.41L881.36 571.38L881.63 572.20L881.01 572.61L881.01 573.99L881.63 574.40L881.36 575.22L880.62 575.19L879.81 576.30L880.07 577.00L879.37 577.50L878.79 577.04L877.48 577.47L877.28 578.18L876.42 578.18L876.22 577.47L874.91 577.04L874.33 577.50L873.63 577.00L873.89 576.30L873.08 575.19L872.34 575.22L872.07 574.40L872.69 573.99L872.69 572.61L872.07 572.20L872.34 571.38L873.08 571.41L873.89 570.30L873.63 569.60L874.33 569.10L874.91 569.56ZM874.75 573.30a2.1 2.1 0 1 0 4.2 0a2.1 2.1 0 1 0 -4.2 0Z"/><path fill="#444" fill-rule="evenodd" d="M870.54 576.81L870.67 576.17L871.43 576.17L871.56 576.81L872.56 577.29L873.14 577.00L873.61 577.59L873.20 578.09L873.45 579.17L874.04 579.45L873.87 580.18L873.22 580.17L872.53 581.04L872.68 581.67L872.00 581.99L871.61 581.48L870.49 581.48L870.10 581.99L869.42 581.67L869.57 581.04L868.88 580.17L868.23 580.18L868.06 579.45L868.65 579.17L868.90 578.09L868.49 577.59L868.96 577.00L869.54 577.29ZM870.15 579.15a0.9 0.9 0 1 0 1.8 0a0.9 0.9 0 1 0 -1.8 0Z"/><path fill="#444" fill-rule="evenodd" d="M876.22 602.13L876.42 601.42L877.28 601.42L877.48 602.13L878.79 602.56L879.37 602.10L880.07 602.60L879.81 603.30L880.62 604.41L881.36 604.38L881.63 605.20L881.01 605.61L881.01 606.99L881.63 607.40L881.36 608.22L880.62 608.19L879.81 609.30L880.07 610.00L879.37 610.50L878.79 610.04L877.48 610.47L877.28 611.18L876.42 611.18L876.22 610.47L874.91 610.04L874.33 610.50L873.63 610.00L873.89 609.30L873.08 608.19L872.34 608.22L872.07 607.40L872.69 606.99L872.69 605.61L872.07 605.20L872.34 604.38L873.08 604.41L873.89 603.30L873.63 602.60L874.33 602.10L874.91 602.56ZM874.75 606.30a2.1 2.1 0 1 0 4.2 0a2.1 2.1 0 1 0 -4.2 0Z"/><path fill="#444" fill-rule="evenodd" d="M870.54 609.81L870.67 609.17L871.43 609.17L871.56 609.81L872.56 610.29L873.14 610.00L873.61 610.59L873.20 611.09L873.45 612.17L874.04 612.45L873.87 613.18L873.22 613.17L872.53 614.04L872.68 614.67L872.00 614.99L871.61 614.48L870.49 614.48L870.10 614.99L869.42 614.67L869.57 614.04L868.88 613.17L868.23 613.18L868.06 612.45L868.65 612.17L868.90 611.09L868.49 610.59L868.96 610.00L869.54 610.29ZM870.15 612.15a0.9 0.9 0 1 0 1.8 0a0.9 0.9 0 1 0 -1.8 0Z"/><path fill="#444" fill-rule="evenodd" d="M876.22 635.13L876.42 634.42L877.28 634.42L877.48 635.13L878.79 635.56L879.37 635.10L880.07 635.60L879.81 636.30L880.62 637.41L881.36 637.38L881.63 638.20L881.01 638.61L881.01 639.99L881.63 640.40L881.36 641.22L880.62 641.19L879.81 642.30L880.07 643.00L879.37 643.50L878.79 643.04L877.48 643.47L877.28 644.18L876.42 644.18L876.22 643.47L874.91 643.04L874.33 643.50L873.63 643.00L873.89 642.30L873.08 641.19L872.34 641.22L872.07 640.40L872.69 639.99L872.69 638.61L872.07 638.20L872.34 637.38L873.08 637.41L873.89 636.30L873.63 635.60L874.33 635.10L874.91 635.56ZM874.75 639.30a2.1 2.1 0 1 0 4.2 0a2.1 2.1 0 1 0 -4.2 0Z"/><path fill="#444" fill-rule="evenodd" d="M870.54 642.81L870.67 642.17L871.43 642.17L871.56 642.81L872.56 643.29L873.14 643.00L873.61 643.59L873.20 644.09L873.45 645.17L874.04 645.45L873.87 646.18L873.22 646.17L872.53 647.04L872.68 647.67L872.00 647.99L871.61 647.48L870.49 647.48L870.10 647.99L869.42 647.67L869.57 647.04L868.88 646.17L868.23 646.18L868.06 645.45L868.65 645.17L868.90 644.09L868.49 643.59L868.96 643.00L869.54 643.29ZM870.15 645.15a0.9 0.9 0 1 0 1.8 0a0.9 0.9 0 1 0 -1.8 0Z"/><path fill="#444" fill-rule="evenodd" d="M876.22 668.13L876.42 667.42L877.28 667.42L877.48 668.13L878.79 668.56L879.37 668.10L880.07 668.60L879.81 669.30L880.62 670.41L881.36 670.38L881.63 671.20L881.01 671.61L881.01 672.99L881.63 673.40L881.36 674.22L880.62 674.19L879.81 675.30L880.07 676.00L879.37 676.50L878.79 676.04L877.48 676.47L877.28 677.18L876.42 677.18L876.22 676.47L874.91 676.04L874.33 676.50L873.63 676.00L873.89 675.30L873.08 674.19L872.34 674.22L872.07 673.40L872.69 672.99L872.69 671.61L872.07 671.20L872.34 670.38L873.08 670.41L873.89 669.30L873.63 668.60L874.33 668.10L874.91 668.56ZM874.75 672.30a2.1 2.1 0 1 0 4.2 0a2.1 2.1 0 1 0 -4.2 0Z"/><path fill="#444" fill-rule="evenodd" d="M870.54 675.81L870.67 675.17L871.43 675.17L871.56 675.81L872.56 676.29L873.14 676.00L873.61 676.59L873.20 677.09L873.45 678.17L874.04 678.45L873.87 679.18L873.22 679.17L872.53 680.04L872.68 680.67L872.00 680.99L871.61 680.48L870.49 680.48L870.10 680.99L869.42 680.67L869.57 680.04L868.88 679.17L868.23 679.18L868.06 678.45L868.65 678.17L868.90 677.09L868.49 676.59L868.96 676.00L869.54 676.29ZM870.15 678.15a0.9 0.9 0 1 0 1.8 0a0.9 0.9 0 1 0 -1.8 0Z"/><path fill="#444" fill-rule="evenodd" d="M876.22 701.13L876.42 700.42L877.28 700.42L877.48 701.13L878.79 701.56L879.37 701.10L880.07 701.60L879.81 702.30L880.62 703.41L881.36 703.38L881.63 704.20L881.01 704.61L881.01 705.99L881.63 706.40L881.36 707.22L880.62 707.19L879.81 708.30L880.07 709.00L879.37 709.50L878.79 709.04L877.48 709.47L877.28 710.18L876.42 710.18L876.22 709.47L874.91 709.04L874.33 709.50L873.63 709.00L873.89 708.30L873.08 707.19L872.34 707.22L872.07 706.40L872.69 705.99L872.69 704.61L872.07 704.20L872.34 703.38L873.08 703.41L873.89 702.30L873.63 701.60L874.33 701.10L874.91 701.56ZM874.75 705.30a2.1 2.1 0 1 0 4.2 0a2.1 2.1 0 1 0 -4.2 0Z"/><path fill="#444" fill-rule="evenodd" d="M870.54 708.81L870.67 708.17L871.43 708.17L871.56 708.81L872.56 709.29L873.14 709.00L873.61 709.59L873.20 710.09L873.45 711.17L874.04 711.45L873.87 712.18L873.22 712.17L872.53 713.04L872.68 713.67L872.00 713.99L871.61 713.48L870.49 713.48L870.10 713.99L869.42 713.67L869.57 713.04L868.88 712.17L868.23 712.18L868.06 711.45L868.65 711.17L868.90 710.09L868.49 709.59L868.96 709.00L869.54 709.29ZM870.15 711.15a0.9 0.9 0 1 0 1.8 0a0.9 0.9 0 1 0 -1.8 0Z"/></svg>
</body></html>
